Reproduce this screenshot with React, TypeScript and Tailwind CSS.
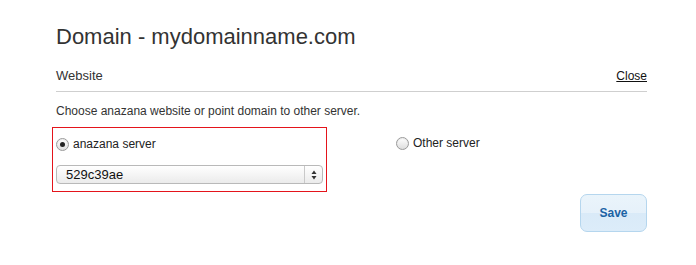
import { useState } from "react"

function Radio({ checked }: { checked: boolean }) {
  return (
    <span className="relative inline-flex w-[13px] h-[13px] rounded-full border border-[#9a9a9a] bg-gradient-to-b from-white to-[#dedede] shadow-[inset_0_1px_1px_rgba(0,0,0,0.08)] items-center justify-center">
      {checked && <span className="w-[5px] h-[5px] rounded-full bg-[#222]" />}
    </span>
  )
}

export default function App() {
  const [server, setServer] = useState<string>("anazana")

  return (
    <div className="w-[696px] h-[265px] bg-white font-['Liberation_Sans',Arial,sans-serif] text-[#222]">
      <div className="ml-[56px] w-[591px] pt-[23px]">
        {/* Header */}
        <h1 className="text-[22px] leading-[28px] text-[#333]">Domain - mydomainname.com</h1>

        <div className="mt-[17px] flex items-end justify-between border-b border-[#cfcfcf] pb-[7px]">
          <span className="text-[13px] leading-[16px] text-[#333]">Website</span>
          <a href="#" className="text-[12px] leading-[16px] text-[#111] underline">Close</a>
        </div>

        <p className="mt-[11px] text-[12px] leading-[16px] text-[#333]">
          Choose anazana website or point domain to other server.
        </p>

        {/* Options */}
        <div className="mt-[8px] flex">
          <div className="-ml-[4px] w-[275px] h-[65px] border border-[#e4141b] px-[3px] pt-[9px]">
            <label className="flex items-center gap-[4px] text-[12px] leading-[14px] cursor-pointer" onClick={() => setServer("anazana")}>
              <Radio checked={server === "anazana"} />
              <span>anazana server</span>
            </label>
            <div className="mt-[14px] flex h-[19px] w-[267px] rounded-[4px] border border-[#b9b9b9] bg-gradient-to-b from-white to-[#ebebeb] text-[13px]">
              <span className="flex-1 pl-[9px] leading-[17px] text-[#111]">529c39ae</span>
              <span className="w-[18px] border-l border-[#c9c9c9] flex items-center justify-center">
                <svg width="6" height="10" viewBox="0 0 6 10">
                  <path d="M3 0.5 L5.5 4 H0.5 Z" fill="#333" />
                  <path d="M3 9.5 L5.5 6 H0.5 Z" fill="#333" />
                </svg>
              </span>
            </div>
          </div>

          <label className="ml-[69px] mt-[9px] h-[14px] flex items-center gap-[4px] text-[12px] leading-[14px] cursor-pointer" onClick={() => setServer("other")}>
            <Radio checked={server === "other"} />
            <span>Other server</span>
          </label>
        </div>

        {/* Footer */}
        <div className="mt-[2px] flex justify-end">
          <button className="w-[67px] h-[38px] rounded-[7px] border border-[#b5d6ee] bg-[linear-gradient(#eaf4fb_0%,#e6f1fa_50%,#d9eaf8_50%,#dcecf9_100%)] text-[12px] font-bold text-[#1b62a4]">
            Save
          </button>
        </div>
      </div>
    </div>
  )
}
